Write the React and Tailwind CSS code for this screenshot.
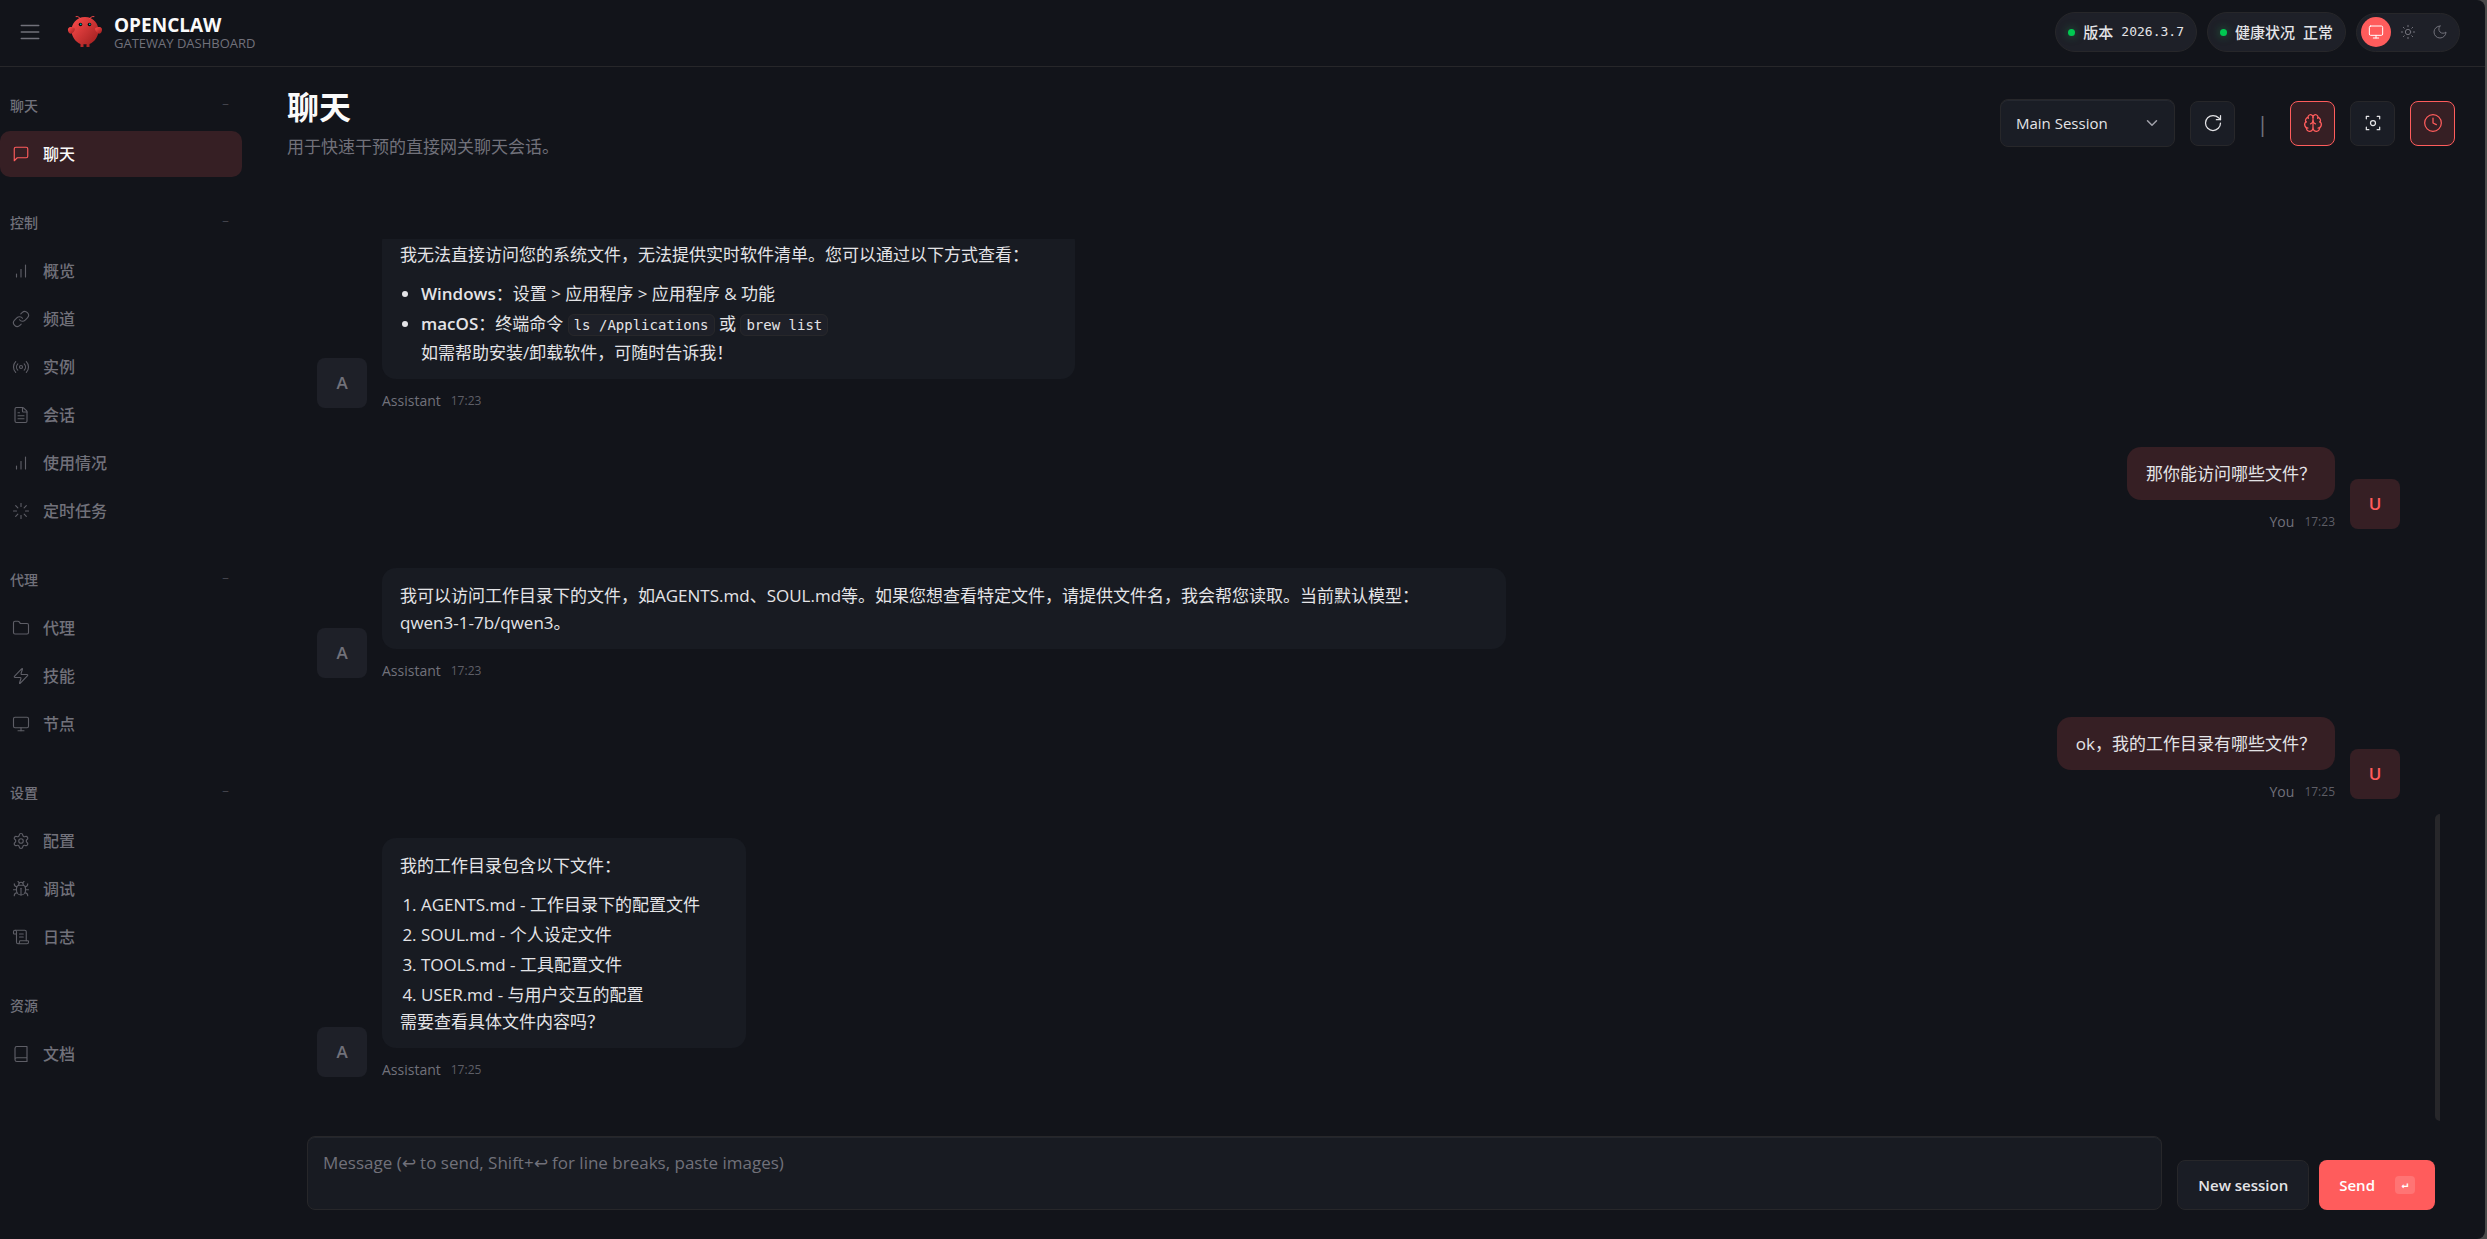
import React from 'react';
import {
  Link,
  Radio,
  FileText,
  Loader,
  Folder,
  Zap,
  Monitor,
  Settings,
  Bug,
  ScrollText,
  Sun,
  RotateCw,
  Brain,
  ChevronDown,
} from 'lucide-react';

const LineIcon = ({ children, ...props }) => (
  <svg viewBox="0 0 24 24" fill="none" stroke="currentColor" strokeLinecap="round" strokeLinejoin="round" {...props}>
    {children}
  </svg>
);

const BarsIcon = (props) => (
  <LineIcon {...props}>
    <path d="M12 20V10" />
    <path d="M18 20V4" />
    <path d="M6 20v-4" />
  </LineIcon>
);

const BookIcon = (props) => (
  <LineIcon {...props}>
    <path d="M4 19.5v-15A2.5 2.5 0 0 1 6.5 2H20v20H6.5a2.5 2.5 0 0 1 0-5H20" />
  </LineIcon>
);

const ChatIcon = (props) => (
  <LineIcon {...props}>
    <path d="M21 15a2 2 0 0 1-2 2H7l-4 4V5a2 2 0 0 1 2-2h14a2 2 0 0 1 2 2z" />
  </LineIcon>
);

const MoonIcon = (props) => (
  <LineIcon {...props}>
    <path d="M12 3a6 6 0 0 0 9 9 9 9 0 1 1-9-9Z" />
  </LineIcon>
);

const navGroups = [
  { label: '聊天', collapsible: true, items: [{ name: '聊天', icon: ChatIcon, active: true }] },
  {
    label: '控制',
    collapsible: true,
    items: [
      { name: '概览', icon: BarsIcon },
      { name: '频道', icon: Link },
      { name: '实例', icon: Radio },
      { name: '会话', icon: FileText },
      { name: '使用情况', icon: BarsIcon },
      { name: '定时任务', icon: Loader },
    ],
  },
  {
    label: '代理',
    collapsible: true,
    items: [
      { name: '代理', icon: Folder },
      { name: '技能', icon: Zap },
      { name: '节点', icon: Monitor },
    ],
  },
  {
    label: '设置',
    collapsible: true,
    items: [
      { name: '配置', icon: Settings },
      { name: '调试', icon: Bug },
      { name: '日志', icon: ScrollText },
    ],
  },
  { label: '资源', collapsible: false, items: [{ name: '文档', icon: BookIcon }] },
];

const Logo = () => (
  <svg className="h-9 w-9 shrink-0" viewBox="0 0 120 120" fill="none" aria-hidden="true">
    <defs>
      <linearGradient id="lobster" x1="0%" y1="0%" x2="100%" y2="100%">
        <stop offset="0%" stopColor="#ff4d4d" />
        <stop offset="100%" stopColor="#991b1b" />
      </linearGradient>
    </defs>
    <path
      fill="url(#lobster)"
      d="M60 10C30 10 15 35 15 55C15 75 30 95 45 100L45 110L55 110L55 100C55 100 60 102 65 100L65 110L75 110L75 100C90 95 105 75 105 55C105 35 90 10 60 10Z"
    />
    <path fill="url(#lobster)" d="M20 45C5 40 0 50 5 60C10 70 20 65 25 55C28 48 25 45 20 45Z" />
    <path fill="url(#lobster)" d="M100 45C115 40 120 50 115 60C110 70 100 65 95 55C92 48 95 45 100 45Z" />
    <path d="M45 15Q35 5 30 8" stroke="#ff4d4d" strokeWidth="3" strokeLinecap="round" />
    <path d="M75 15Q85 5 90 8" stroke="#ff4d4d" strokeWidth="3" strokeLinecap="round" />
    <circle cx="45" cy="35" r="6" fill="#050810" />
    <circle cx="75" cy="35" r="6" fill="#050810" />
    <circle cx="46" cy="34" r="2.5" fill="#00e5cc" />
    <circle cx="76" cy="34" r="2.5" fill="#00e5cc" />
  </svg>
);

const StatusPill = ({ label, children }) => (
  <div className="flex h-10 items-center gap-2 rounded-full border border-[#27272a] bg-[#1e2028] px-3 text-[15px] font-medium text-[#e4e4e7]">
    <span className="h-[7px] w-[7px] rounded-full bg-green-500 shadow-[0_0_8px_rgba(34,197,94,0.5)]" />
    <span>{label}</span>
    {children}
  </div>
);

const TopBar = () => (
  <header className="flex h-[67px] shrink-0 items-center justify-between border-b border-[#27272a] pr-[25px] pb-0.5 pl-[17px]">
    <div className="flex items-center">
      <button type="button" aria-label="Toggle sidebar" className="mr-6 text-[#71717a]">
        <LineIcon className="h-[26px] w-[26px]" strokeWidth="1.5">
          <path d="M4 6h16M4 12h16M4 18h16" />
        </LineIcon>
      </button>
      <Logo />
      <div className="ml-[11px] pt-0.5">
        <div className="text-[19px] leading-5 font-bold text-[#fafafa]">OPENCLAW</div>
        <div className="text-[13px] leading-4 font-medium text-[#71717a]">GATEWAY DASHBOARD</div>
      </div>
    </div>
    <div className="flex items-center gap-2.5">
      <StatusPill label="版本">
        <span className="font-['DejaVu_Sans_Mono',monospace] text-[13px] font-normal">2026.3.7</span>
      </StatusPill>
      <StatusPill label="健康状况">
        <span>正常</span>
      </StatusPill>
      <div className="flex h-[39px] items-center gap-0.5 rounded-full border border-[#27272a] bg-[#1e2028] px-1 text-[#71717a]">
        <button type="button" aria-label="System theme" className="flex h-[30px] w-[30px] items-center justify-center rounded-full bg-[#ff5c5c] text-white">
          <Monitor size={16} strokeWidth={1.5} />
        </button>
        <button type="button" aria-label="Light theme" className="flex h-[30px] w-[30px] items-center justify-center rounded-full">
          <Sun size={16} strokeWidth={1.5} />
        </button>
        <button type="button" aria-label="Dark theme" className="flex h-[30px] w-[30px] items-center justify-center rounded-full">
          <MoonIcon className="h-4 w-4" strokeWidth="1.5" />
        </button>
      </div>
    </div>
  </header>
);

const NavItem = ({ name, icon: Icon, active }) => (
  <a
    href="#"
    className={
      active
        ? 'flex h-[46px] items-center gap-[13px] rounded-[10px] bg-[#361f24] pl-3 text-base font-medium text-[#fafafa]'
        : 'flex h-[46px] items-center gap-[13px] rounded-[10px] pl-3 text-base font-medium text-[#71717a]'
    }
  >
    <Icon
      className={active ? 'h-[18px] w-[18px] shrink-0 text-[#ff5c5c]' : 'h-[18px] w-[18px] shrink-0 opacity-80'}
      strokeWidth={1.5}
    />
    <span>{name}</span>
  </a>
);

const Sidebar = () => (
  <nav className="flex w-[242px] shrink-0 flex-col gap-[27px] pt-5">
    {navGroups.map((group) => (
      <div key={group.label}>
        <button
          type="button"
          className="mb-2 flex h-9 w-full items-center justify-between pr-[13px] pl-2.5 text-[14px] font-medium text-[#71717a]"
        >
          <span>{group.label}</span>
          {group.collapsible && <span className="text-xs opacity-60">−</span>}
        </button>
        <div className="flex flex-col gap-0.5">
          {group.items.map((item) => (
            <NavItem key={item.name} {...item} />
          ))}
        </div>
      </div>
    ))}
  </nav>
);

const IconButton = ({ label, active, children }) => (
  <button
    type="button"
    aria-label={label}
    className={
      active
        ? 'flex h-[45px] w-[45px] items-center justify-center rounded-lg border border-[#ff5c5c] bg-[#361f24] text-[#ff5c5c]'
        : 'flex h-[45px] w-[45px] items-center justify-center rounded-lg border border-[#27272a] bg-[#1a1d25] text-[#e4e4e7]'
    }
  >
    {children}
  </button>
);

const ChatHeader = () => (
  <div className="flex shrink-0 items-center justify-between">
    <div>
      <h1 className="text-[32px] leading-10 font-bold text-[#fafafa]">聊天</h1>
      <p className="mt-1.5 text-[17px] leading-7 text-[#71717a]">用于快速干预的直接网关聊天会话。</p>
    </div>
    <div className="flex items-center gap-[15px] pb-0.5">
      <div className="relative">
        <select
          aria-label="Session"
          className="h-12 w-[175px] appearance-none rounded-lg border border-[#27272a] bg-[#1a1d25] pl-[15px] text-[15px] text-[#e4e4e7] shadow-[inset_0_1px_0_rgba(255,255,255,0.05)]"
        >
          <option>Main Session</option>
        </select>
        <ChevronDown className="pointer-events-none absolute top-[15px] right-[14px] text-[#a1a1aa]" size={18} strokeWidth={2} />
      </div>
      <IconButton label="Refresh">
        <RotateCw size={20} strokeWidth={1.5} />
      </IconButton>
      <span className="w-[25px] text-center text-[22px] text-[#71717a]">|</span>
      <IconButton label="Toggle thinking" active>
        <Brain size={20} strokeWidth={1.5} />
      </IconButton>
      <IconButton label="Focus mode">
        <LineIcon className="h-5 w-5" strokeWidth="1.5">
          <path d="M4 7V4h3M20 7V4h-3M4 17v3h3M20 17v3h-3" />
          <circle cx="12" cy="12" r="3" />
        </LineIcon>
      </IconButton>
      <IconButton label="Cron sessions" active>
        <LineIcon className="h-5 w-5" strokeWidth="1.5">
          <circle cx="12" cy="12" r="10" />
          <path d="M12 6v6l4 2" />
        </LineIcon>
      </IconButton>
    </div>
  </div>
);

const Code = ({ children }) => (
  <code className="rounded-md border border-[#27272a] bg-[#1e2028] px-[5px] py-0.5 font-['DejaVu_Sans_Mono',monospace] text-[14px]">
    {children}
  </code>
);

const MessageMeta = ({ who, time }) => (
  <div className="mt-3 flex items-center gap-2.5 text-[14px] leading-5 text-[#71717a]">
    <span className="font-medium">{who}</span>
    <span className="text-[12px] opacity-80">{time}</span>
  </div>
);

const AssistantMessage = ({ time, children }) => (
  <div className="flex items-end gap-[15px]">
    <div className="mb-[3px] flex h-[50px] w-[50px] shrink-0 items-center justify-center rounded-lg bg-[#1e2028] text-[17px] font-semibold text-[#71717a]">
      A
    </div>
    <div className="flex max-w-[1124px] flex-col items-start">
      <div className="rounded-[14px] bg-[#181b22] pt-[14px] pr-[46px] pb-[13px] pl-[18px] text-[17px] leading-[27px] text-[#e4e4e7]">
        {children}
      </div>
      <MessageMeta who="Assistant" time={time} />
    </div>
  </div>
);

const UserMessage = ({ time, children }) => (
  <div className="flex items-end justify-end gap-[15px]">
    <div className="flex flex-col items-end">
      <div className="rounded-[14px] bg-[#361f24] px-[19px] py-[13px] text-[17px] leading-[27px] text-[#e4e4e7]">
        {children}
      </div>
      <MessageMeta who="You" time={time} />
    </div>
    <div className="mb-[3px] flex h-[50px] w-[50px] shrink-0 items-center justify-center rounded-lg bg-[#361f24] text-[17px] font-semibold text-[#ff5c5c]">
      U
    </div>
  </div>
);

const Thread = () => (
  <div className="relative mt-[78px] mr-[15px] flex min-h-0 flex-1 flex-col justify-end gap-9 overflow-hidden pr-10 pb-[41px] pl-[30px]">
    <AssistantMessage time="17:23">
      <p>我无法直接访问您的系统文件，无法提供实时软件清单。您可以通过以下方式查看：</p>
      <ul className="mt-3 list-disc space-y-[3px] pl-[21px]">
        <li>
          <strong className="font-semibold">Windows</strong>：设置 &gt; 应用程序 &gt; 应用程序 &amp; 功能
        </li>
        <li>
          <strong className="font-semibold">macOS</strong>：终端命令 <Code>ls /Applications</Code> 或 <Code>brew list</Code>
          <br />
          如需帮助安装/卸载软件，可随时告诉我！
        </li>
      </ul>
    </AssistantMessage>
    <UserMessage time="17:23">那你能访问哪些文件？</UserMessage>
    <AssistantMessage time="17:23">
      <p>
        我可以访问工作目录下的文件，如AGENTS.md、SOUL.md等。如果您想查看特定文件，请提供文件名，我会帮您读取。当前默认模型：
        <span className="whitespace-nowrap">qwen3-1-7b/qwen3。</span>
      </p>
    </AssistantMessage>
    <UserMessage time="17:25">ok，我的工作目录有哪些文件？</UserMessage>
    <AssistantMessage time="17:25">
      <p>我的工作目录包含以下文件：</p>
      <ol className="mt-3 list-decimal space-y-[3px] pl-[21px]">
        <li>AGENTS.md - 工作目录下的配置文件</li>
        <li>SOUL.md - 个人设定文件</li>
        <li>TOOLS.md - 工具配置文件</li>
        <li>USER.md - 与用户交互的配置</li>
      </ol>
      <p>需要查看具体文件内容吗？</p>
    </AssistantMessage>
    {/* scroll thumb */}
    <div className="absolute right-0 bottom-0 h-[307px] w-[5px] rounded-l-full bg-[#27272a]" />
  </div>
);

const Composer = () => (
  <form className="mx-5 mt-[15px] flex shrink-0 items-end gap-[15px]">
    <textarea
      aria-label="Message"
      placeholder="Message (↩ to send, Shift+↩ for line breaks, paste images)"
      className="h-[74px] flex-1 resize-none rounded-lg border border-[#27272a] bg-[#181b22] px-[15px] py-3 text-[17px] leading-7 text-[#e4e4e7] shadow-[inset_0_1px_0_rgba(255,255,255,0.05)] placeholder:text-[#71717a]"
    />
    <div className="flex gap-2.5">
      <button
        type="button"
        className="h-[50px] rounded-lg border border-[#27272a] bg-[#1a1d25] px-5 text-[15px] font-semibold text-[#e4e4e7]"
      >
        New session
      </button>
      <button
        type="button"
        className="flex h-[50px] items-center gap-5 rounded-lg bg-[#ff5c5c] px-5 text-[15px] font-semibold text-white"
      >
        Send
        <kbd className="flex h-[18px] w-5 items-center justify-center rounded-sm bg-white/15 text-[11px]">↵</kbd>
      </button>
    </div>
  </form>
);

export default function App() {
  return (
    <div className="h-screen bg-[#4a4a4a] font-['Open_Sans','Noto_Sans_CJK_SC',sans-serif]">
      <div className="mr-0.5 flex h-screen flex-col overflow-hidden rounded-r-lg bg-[#12141a]">
        <TopBar />
        <div className="flex min-h-0 flex-1">
          <Sidebar />
          <main className="flex min-w-0 flex-1 flex-col pt-5 pr-[30px] pb-[29px] pl-[45px]">
            <ChatHeader />
            <Thread />
            <Composer />
          </main>
        </div>
      </div>
    </div>
  );
}
